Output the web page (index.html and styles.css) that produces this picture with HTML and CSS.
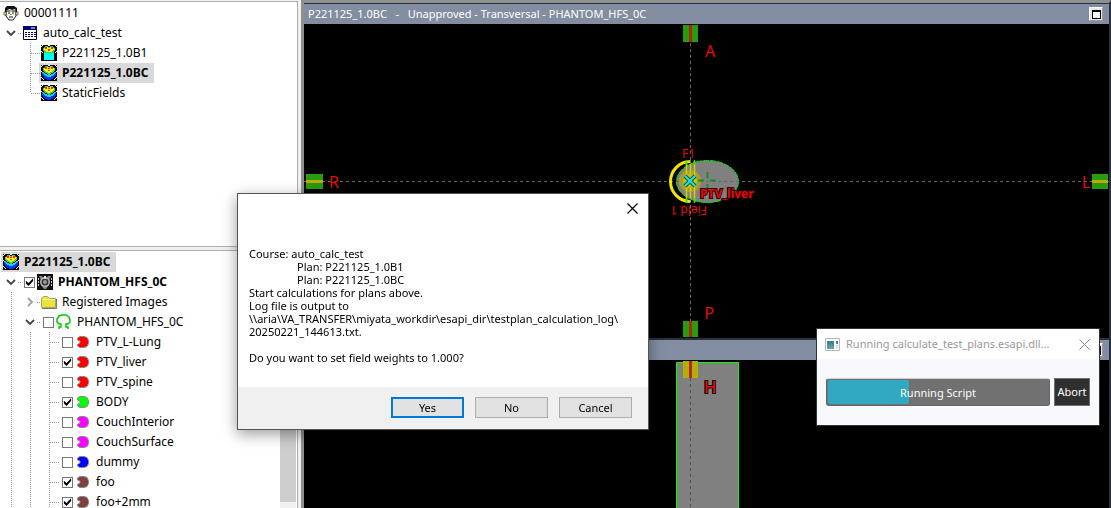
FILE: index.html
```html
<!DOCTYPE html>
<html lang="en">
<head>
<meta charset="utf-8">
<title>Plan evaluation</title>
<link rel="stylesheet" href="styles.css">
</head>
<body>
<svg class="defs" aria-hidden="true">
  <symbol id="chev-down" viewBox="0 0 10 10"><path d="M1 3l4 4 4-4" fill="none" stroke="#444" stroke-width="1.8"/></symbol>
  <symbol id="chev-right" viewBox="0 0 10 10"><path d="M3 1l4 4-4 4" fill="none" stroke="#a0a0a0" stroke-width="1.8"/></symbol>
  <symbol id="patient" viewBox="0 0 16 16">
    <path d="M3 6h10v5l-3 4H6l-3-4z" fill="#fff" stroke="#111"/>
    <path d="M1 7h2v3H1zM13 7h2v3h-2z" fill="#ffc" stroke="#333" stroke-width=".7"/>
    <path d="M2 7V3l2-2h7l3 2v4h-1L12 4 9 5 7 4 4 5 3 7z" fill="#111"/>
    <path d="M5 8h2M9 8h2M6 12h4M8 9v1" stroke="#111"/><path d="M4 10h2M10 10h2M7 6h2M7 14h2" stroke="#f4e56a"/>
  </symbol>
  <symbol id="course" viewBox="0 0 14 14">
    <path d="M.5.5h13v13H.5z" fill="#fff" stroke="#000"/><path d="M0 0h14v4H0z" fill="#000070"/>
    <path d="M8 2h4" stroke="#fff"/><path d="M2 6.500h11M2 8.500h11M2 10.500h11" stroke="#000070" stroke-dasharray="2 1"/>
  </symbol>
  <symbol id="plan-open" viewBox="0 0 16 16" shape-rendering="crispEdges">
    <path d="M0 0h16v16H0z"/>
    <path d="M2 3h1V2h1V1h3v1h2V1h3v1h1v1h1v3h-1v2H3V6H2z" fill="#2fd060"/>
    <path d="M3 3h1V2h3v1h2V2h3v1h1v2h-1v1h-1v1H5V6H4V5H3z" fill="#ff0"/>
    <path d="M4 2h2v2H4zM10 2h2v2h-2zM7 4h2v2H7z" fill="#f20"/><path d="M3 8h10v7H3z" fill="#0ff"/>
    <path d="M0 1h1v1H0zM1 0h1v1H1zM15 1h1v1h-1zM14 0h1v1h-1zM0 6h1v1H0zM1 7h1v1H1zM15 6h1v1h-1zM14 7h1v1h-1zM7 0h2v1H7z" fill="#fff"/>
  </symbol>
  <symbol id="plan" viewBox="0 0 16 16" shape-rendering="crispEdges">
    <path d="M0 0h16v16H0z"/>
    <path d="M1 8h2v1h1v1h2v1h4v-1h2V9h1V8h2v3h-1v1h-1v1h-1v1h-2v1H6v-1H4v-1H3v-1H2v-1H1z" fill="#03f"/>
    <path d="M1 7h2v1h1v1h2v1h4V9h2V8h1V7h2v1h-1v1h-1v1h-1v1h-2v1H6v-1H4v-1H3V9H2V8H1z" fill="#0df"/>
    <path d="M2 3h1V2h1V1h3v1h2V1h3v1h1v1h1v3h-1v1h-1v1h-2v1h-1v1H7V9H6V8H4V7H3V6H2z" fill="#3d5"/>
    <path d="M3 3h1V2h3v1h2V2h3v1h1v2h-1v1h-1v1H9v1H7V7H5V6H4V5H3z" fill="#ff0"/>
    <path d="M3 2h3v2H4V3H3zM10 2h3v1h-1v1h-2zM7 3h2v1H7zM7 5h2v1H7z" fill="#f20"/>
    <path d="M0 1h1v1H0zM1 0h1v1H1zM15 1h1v1h-1zM14 0h1v1h-1zM0 6h1v1H0zM15 6h1v1h-1zM0 12h1v1H0zM1 13h1v1H1zM2 14h1v1H2zM15 12h1v1h-1zM14 13h1v1h-1zM13 14h1v1h-1zM7 0h2v1H7z" fill="#fff"/>
  </symbol>
  <symbol id="ct" viewBox="0 0 16 16">
    <path d="M0 0h16v16H0z" fill="#111"/><path d="M2 2h3l1 2h4l1-2h3l-2 4v5l-3 4H7l-3-4V6z" fill="#888"/>
    <circle cx="8" cy="8" r="5" fill="#bbb"/><circle cx="8" cy="8" r="3.500" fill="#333"/><circle cx="8" cy="8" r="2" fill="#999"/><path d="M7 2h2v3H7z" fill="#ddd"/>
    <path d="M1.500 4v8M14.500 4v8" stroke="#ccc" stroke-dasharray="2 1"/>
  </symbol>
  <symbol id="folder" viewBox="0 0 16 16"><path d="M.5 13.500v-9l2-2h4l2 2h6v9z" fill="#e9e33c" stroke="#aaa35a"/><path d="M2 5.500h12" stroke="#ffa"/><path d="M15.500 5v9.500H1" fill="none" stroke="#777"/></symbol>
  <symbol id="contour" viewBox="0 0 16 16"><path d="M3 15v-2h2v-3H3L1 8V5l2-3 3-1h4l3 2 1 3v2l-2 2h-2v3h2v2" fill="none" stroke="#00c800" stroke-width="1.500"/></symbol>
  <symbol id="organ" viewBox="0 0 14 14"><path d="M4 1.500h4l3 1 1.500 3v3l-1.500 3-3 1H4L1.500 11V9.500L4 8V6L1.500 5V3z" fill="currentColor" stroke="#888"/></symbol>
</svg>

<main class="workspace">
  <div class="side">
    <section class="pane pane-plans" aria-label="Plans">
      <ul class="tree">
        <li class="row"><span class="item"><svg class="icon"><use href="#patient"/></svg>00001111</span></li>
        <li class="row"><button class="cell twist dash" aria-label="Collapse"><svg><use href="#chev-down"/></svg></button><span class="item"><svg class="icon organ"><use href="#course"/></svg>auto_calc_test</span></li>
        <li class="row"><i class="cell"></i><i class="cell line dash"></i><span class="item"><svg class="icon"><use href="#plan-open"/></svg>P221125_1.0B1</span></li>
        <li class="row"><i class="cell"></i><i class="cell line dash"></i><span class="item selected"><svg class="icon"><use href="#plan"/></svg>P221125_1.0BC</span></li>
        <li class="row"><i class="cell"></i><i class="cell line dash last"></i><span class="item"><svg class="icon"><use href="#plan"/></svg>StaticFields</span></li>
      </ul>
    </section>
    <section class="pane pane-structures" aria-label="Structures">
      <ul class="tree">
        <li class="row"><span class="item selected"><svg class="icon"><use href="#plan"/></svg>P221125_1.0BC</span></li>
        <li class="row"><button class="cell twist dash" aria-label="Collapse"><svg><use href="#chev-down"/></svg></button><label class="item strong"><input type="checkbox" checked><svg class="icon"><use href="#ct"/></svg>PHANTOM_HFS_0C</label></li>
        <li class="row"><i class="cell line"></i><button class="cell twist dash" aria-label="Expand"><svg><use href="#chev-right"/></svg></button><span class="item"><svg class="icon"><use href="#folder"/></svg>Registered Images</span></li>
        <li class="row"><i class="cell line"></i><button class="cell twist dash" aria-label="Collapse"><svg><use href="#chev-down"/></svg></button><label class="item"><input type="checkbox"><svg class="icon"><use href="#contour"/></svg>PHANTOM_HFS_0C</label></li>
        <li class="row"><i class="cell line"></i><i class="cell line"></i><i class="cell line dash"></i><label class="item"><input type="checkbox"><svg class="icon organ red"><use href="#organ"/></svg>PTV_L-Lung</label></li>
        <li class="row"><i class="cell line"></i><i class="cell line"></i><i class="cell line dash"></i><label class="item"><input type="checkbox" checked><svg class="icon organ red"><use href="#organ"/></svg>PTV_liver</label></li>
        <li class="row"><i class="cell line"></i><i class="cell line"></i><i class="cell line dash"></i><label class="item"><input type="checkbox"><svg class="icon organ red"><use href="#organ"/></svg>PTV_spine</label></li>
        <li class="row"><i class="cell line"></i><i class="cell line"></i><i class="cell line dash"></i><label class="item"><input type="checkbox" checked><svg class="icon organ green"><use href="#organ"/></svg>BODY</label></li>
        <li class="row"><i class="cell line"></i><i class="cell line"></i><i class="cell line dash"></i><label class="item"><input type="checkbox"><svg class="icon organ magenta"><use href="#organ"/></svg>CouchInterior</label></li>
        <li class="row"><i class="cell line"></i><i class="cell line"></i><i class="cell line dash"></i><label class="item"><input type="checkbox"><svg class="icon organ magenta"><use href="#organ"/></svg>CouchSurface</label></li>
        <li class="row"><i class="cell line"></i><i class="cell line"></i><i class="cell line dash"></i><label class="item"><input type="checkbox"><svg class="icon organ blue"><use href="#organ"/></svg>dummy</label></li>
        <li class="row"><i class="cell line"></i><i class="cell line"></i><i class="cell line dash"></i><label class="item"><input type="checkbox" checked><svg class="icon organ brown"><use href="#organ"/></svg>foo</label></li>
        <li class="row"><i class="cell line"></i><i class="cell line"></i><i class="cell line dash"></i><label class="item"><input type="checkbox" checked><svg class="icon organ brown"><use href="#organ"/></svg>foo+2mm</label></li>
      </ul>
      <div class="scrollbar"><div class="thumb"></div></div>
    </section>
  </div>

  <div class="views">
    <section class="view view-transversal">
      <header class="bar"><h2 class="bar-title">P221125_1.0BC&nbsp;&nbsp; -&nbsp;&nbsp; Unapproved - Transversal - PHANTOM_HFS_0C</h2><button class="max" aria-label="Maximize"><span class="max-box"></span></button></header>
      <svg class="scene" viewBox="304 24 805 314" preserveAspectRatio="xMidYMid slice">
        <ellipse cx="707.500" cy="181.500" rx="31" ry="21" fill="#808080" stroke="#00f000" stroke-dasharray="6 1"/>
        <path d="M690.500 25v312M304 181.500h805" stroke="#666" stroke-dasharray="3 3"/>
        <circle cx="690" cy="181" r="11" fill="#b0a61c" opacity=".8"/>
        <circle cx="690" cy="181" r="7" fill="#d8cc20" opacity=".6"/>
        <path d="M690.500 161.500a20 20 0 0 0 0 40" fill="none" stroke="#f0e800" stroke-width="3"/>
        <path d="M686.500 161v41M694.500 161v41M690.500 164v10M690.500 188v10" stroke="#d8d000" stroke-width="1.500"/>
        <path d="M686.500 160v5M694.500 160v5M686.500 198v5M694.500 198v5" stroke="#3ee000" stroke-width="1.500"/>
        <path d="M685 176l10 10M695 176l-10 10" stroke="#063" stroke-width="4"/>
        <path d="M685 176l10 10M695 176l-10 10" stroke="#25e0e8" stroke-width="1.800"/>
        <path d="M707.500 172v6M707.500 184v6M698 180.500h6M710 180.500h6" stroke="#129020" stroke-width="2"/>
        <path d="M683 25h15v17h-15zM683 321h15v16h-15zM306 174h17v15h-17zM1092 174h16v15h-16z" fill="#2a9b0c"/>
        <path d="M690.500 25v17M690.500 321v16" stroke="#a82810" stroke-width="3"/>
        <path d="M306 181.500h17M1092 181.500h16" stroke="#b5ae08" stroke-width="3"/>
        <g class="mark" text-anchor="middle">
          <text x="710" y="57">A</text><text x="709" y="319">P</text><text x="334" y="188">R</text><text x="1086" y="188">L</text>
        </g>
        <text class="tag" x="682" y="158">F1</text>
        <text class="tag" transform="translate(707 206) rotate(180)">Field 1</text>
        <text class="tag tag-strong" x="700" y="198">PTV_liver</text>
      </svg>
    </section>
    <section class="view view-frontal">
      <header class="bar"><button class="max" aria-label="Maximize"><span class="max-box"></span></button></header>
      <svg class="scene" viewBox="304 360 805 148" preserveAspectRatio="xMidYMin slice">
        <path d="M676.500 520V362.500h62V520" fill="#808080" stroke="#0f0"/>
        <path d="M690.500 378v142" stroke="#505050" stroke-dasharray="3 3"/>
        <path d="M683 361h15v17h-15z" fill="#b3ae08"/><path d="M690.500 361v17" stroke="#b02a10" stroke-width="3"/>
        <text class="mark mark-outline" x="710" y="393" text-anchor="middle">H</text>
      </svg>
    </section>
  </div>
</main>

<div class="dialog" role="dialog" aria-label="Confirm calculation">
  <button class="dialog-close" aria-label="Close"><svg viewBox="0 0 11 11"><path d="M.5.5l10 10M10.500.5l-10 10" stroke="#000" stroke-width="1.200"/></svg></button>
  <div class="dialog-text">
    <p>Course: auto_calc_test</p>
    <p class="indent">Plan: P221125_1.0B1</p>
    <p class="indent">Plan: P221125_1.0BC</p>
    <p>Start calculations for plans above.</p>
    <p>Log file is output to</p>
    <p>\\aria\VA_TRANSFER\miyata_workdir\esapi_dir\testplan_calculation_log\<br>20250221_144613.txt.</p>
    <p class="question">Do you want to set field weights to 1.000?</p>
  </div>
  <div class="dialog-actions"><button class="btn btn-default">Yes</button><button class="btn">No</button><button class="btn">Cancel</button></div>
</div>

<div class="progress-window" role="dialog" aria-label="Script progress">
  <div class="progress-title">
    <svg class="app" viewBox="0 0 15 13"><defs><linearGradient id="appfill" x2="0" y2="1"><stop stop-color="#3c6fa8"/><stop offset="1" stop-color="#5bb58a"/></linearGradient></defs><path d="M.5.5h14v12H.5z" fill="#fff" stroke="#b4b8bb"/><path d="M2 3h7v8H2z" fill="url(#appfill)"/><path d="M11 3h2v3h-2z" fill="#4a86a8"/><path d="M11 7h2v4h-2z" fill="#ddd"/></svg>
    <span class="progress-name">Running calculate_test_plans.esapi.dll...</span>
    <button class="progress-close" aria-label="Close"><svg viewBox="0 0 11 11"><path d="M.5.5l10 10M10.500.5l-10 10" stroke="#888"/></svg></button>
  </div>
  <div class="progress-body">
    <div class="meter" role="progressbar" aria-valuenow="37"><div class="meter-fill" style="width:37%"></div><span class="meter-label">Running Script</span></div>
    <button class="abort">Abort</button>
  </div>
</div>
</body>
</html>
```

FILE: styles.css
```css
* { box-sizing: border-box; }
body { margin: 0; height: 100vh; overflow: hidden; background: #f0f0f0; color: #000; font: 12px/20px "Noto Sans", "Open Sans", sans-serif; }
button { font: inherit; color: inherit; padding: 0; border: 0; background: none; }
p, h2, ul { margin: 0; padding: 0; }
.defs { display: none; }

.workspace { display: grid; grid-template-columns: 301px minmax(0, 1fr); height: 100%; }
.side { display: flex; flex-direction: column; gap: 3px; padding: 1px 3px 0 0; min-height: 0; }
.pane { background: #fff; border: solid #adb0ad; border-width: 1px 1px 1px 0; overflow: hidden; }
.pane-plans { flex: 0 0 246px; padding-top: 1px; }
.pane-structures { flex: 1; display: flex; padding: 1px 1px 0 0; border-bottom: 0; }
.tree { flex: 1; list-style: none; }
.row { display: flex; height: 20px; padding-left: 3px; white-space: nowrap; }
.cell { position: relative; flex: none; width: 19px; height: 20px; }
.line { background: repeating-linear-gradient(#999 0 1px, transparent 1px 2px) 8px 0 / 1px 100% no-repeat; }
.line.last { background-size: 1px 50%; }
.dash::after { content: ""; position: absolute; left: 9px; right: 1px; top: 10px; height: 1px; background: repeating-linear-gradient(90deg, #999 0 1px, transparent 1px 2px); }
.twist.dash::after { left: 15px; }
.twist svg { display: block; width: 10px; height: 10px; margin-left: 3px; }
.item { display: flex; align-items: center; gap: 5px; padding-right: 4px; line-height: 12px; }
.selected { background: #d9d9d9; margin-left: -2px; padding-left: 2px; padding-right: 6px; }
.selected, .strong { font-weight: 700; }
.icon { flex: none; width: 16px; height: 16px; }
.organ { height: 14px; }
.red { color: #f00; } .green { color: #0f0; } .magenta { color: #f0f; } .blue { color: #00f; } .brown { color: #804040; }
.item input { appearance: none; flex: none; width: 11px; height: 11px; margin: 0 -3px 0 2px; border: 1px solid #777; background: #fff; }
.item input:checked::before { content: ""; display: block; height: 9px; background: #000; clip-path: polygon(10% 35%, 40% 62%, 90% 8%, 90% 38%, 40% 95%, 10% 66%); }
.scrollbar { width: 16px; padding-bottom: 6px; background: #f0f0f0; }
.thumb { height: 100%; background: #cdcdcd; }

.views { display: flex; flex-direction: column; border: solid #8d908e; border-width: 3px 2px 0 3px; border-right-color: #28323e; min-height: 0; }
.view { display: flex; flex-direction: column; background: #000; min-height: 0; overflow: hidden; }
.view-transversal { flex: 0 1 335px; border-top: 1px solid #28323e; }
.view-frontal { flex: 1 0 0; border-top: 2px solid #28323e; }
.bar { flex: none; display: flex; align-items: center; justify-content: flex-end; height: 20px; padding: 0 6px 0 4px; background: #838da1; color: #fff; }
.bar-title { flex: 1; font-size: 11px; font-weight: 400; }
.max { display: grid; place-items: center; width: 14px; height: 14px; background: #e8e8e8; border: 1px solid; border-color: #fff #999 #999 #fff; }
.max-box { width: 9px; height: 9px; border: 1px solid #000; border-top-width: 2px; background: #fff; }
.scene { display: block; flex: 1; width: 100%; min-height: 0; }
.mark { font-size: 16px; fill: #e80808; }
.mark-outline { font-size: 17px; font-weight: 500; stroke: #000; stroke-width: 2px; paint-order: stroke; }
.tag { font-size: 12px; fill: #e80808; }
.tag-strong { font-weight: 700; stroke: #200; stroke-width: 2px; paint-order: stroke; }

.dialog { position: fixed; left: 237px; top: 193px; width: 412px; display: flex; flex-direction: column; background: #fff; border: 1px solid #555; box-shadow: 0 4px 14px rgba(0, 0, 0, .4); font-size: 11px; line-height: 13px; }
.dialog-close { align-self: flex-end; width: 11px; height: 11px; margin: 9px 10px 0 0; }
.dialog-close svg, .progress-close svg { display: block; width: 11px; height: 11px; }
.dialog-text { padding: 33px 11px 23px; }
.indent { padding-left: 48px; }
.question { padding-top: 13px; }
.dialog-actions { display: flex; justify-content: flex-end; gap: 11px; padding: 10px 16px 11px; background: #f0f0f0; }
.btn { width: 73px; height: 21px; background: #e1e1e1; border: 1px solid #adadad; }
.btn-default { border: 2px solid #0078d7; }

.progress-window { position: fixed; left: 816px; top: 328px; width: 284px; background: #f8f9fc; border: 1px solid #333; color: #999; font-size: 11px; }
.progress-title { display: flex; align-items: center; gap: 6px; height: 30px; padding: 0 9px 0 8px; background: #fff; }
.app { width: 15px; height: 13px; }
.progress-name { flex: 1; white-space: nowrap; }
.progress-close { width: 11px; height: 11px; }
.progress-body { display: flex; gap: 4px; padding: 19px 9px 19px 9px; color: #fff; }
.meter { position: relative; flex: 1; height: 28px; padding: 1px; background: #717171; border: 1px solid #666; border-top-color: #ccc; border-radius: 3px; text-align: center; }
.meter-fill { height: 100%; background: #31a9c3; border-radius: 2px; }
.meter-label { position: absolute; inset: 0; line-height: 28px; }
.abort { width: 36px; height: 28px; background: #303030; border: 1px solid #707070; color: #fff; }
```
